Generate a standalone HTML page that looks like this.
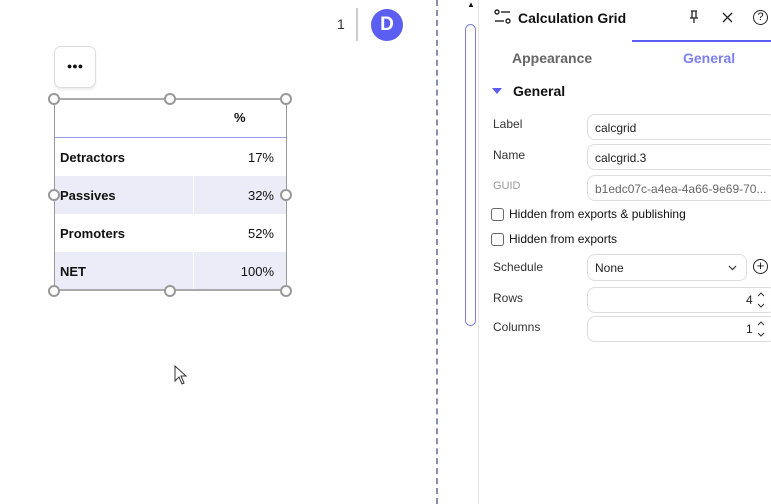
<!DOCTYPE html>
<html><head><style>
*{box-sizing:border-box;margin:0;padding:0}
body{width:771px;height:504px;background:#fff;position:relative;overflow:hidden;font-family:"Liberation Sans",sans-serif;color:#111}
.a{position:absolute}
.h{position:absolute;width:12px;height:12px;border:2px solid #999;border-radius:50%;background:#fff}
.row{position:absolute;left:54px;width:233px;height:38px;font-weight:bold;font-size:13px}
.row span{position:absolute;left:6px;top:12px}
.row b{position:absolute;right:13px;top:12px;font-weight:normal}
.lbl{position:absolute;left:493px;font-size:12px;color:#333}
.inp{position:absolute;left:587px;width:190px;height:26px;border:1px solid #ddd;border-radius:8px;font-size:12px;padding:6px 7px;color:#222}
.cb{position:absolute;left:491px;width:13px;height:13px;border:1px solid #666;border-radius:3px}
.sp{position:absolute;left:757px;font-size:9px;line-height:8px;color:#333}
</style></head><body>
<div class="a" style="left:337px;top:16px;font-size:14px;color:#333">1</div>
<div class="a" style="left:356px;top:8px;width:2px;height:33px;background:#ccc"></div>
<div class="a" style="left:371px;top:9px;width:32px;height:32px;border-radius:50%;background:#5b5ef0;color:#fff;font-weight:bold;font-size:19px;text-align:center;line-height:32px">D</div>
<div class="a" style="left:54px;top:46px;width:42px;height:42px;border:1px solid #ddd;border-radius:7px;box-shadow:0 2px 2px #eee;text-align:center;font-weight:bold;font-size:9px;line-height:38px">●●●</div>
<div class="a" style="left:234px;top:110px;font-weight:bold;font-size:13px">%</div>
<div class="row" style="top:138px"><span>Detractors</span><b>17%</b></div>
<div class="row" style="top:176px;background:#ececf8"><span>Passives</span><b>32%</b></div>
<div class="row" style="top:214px"><span>Promoters</span><b>52%</b></div>
<div class="row" style="top:252px;background:#ececf8"><span>NET</span><b>100%</b></div>
<div class="a" style="left:193px;top:176px;width:1px;height:38px;background:#fff"></div>
<div class="a" style="left:193px;top:252px;width:1px;height:38px;background:#fff"></div>
<div class="a" style="left:54px;top:137px;width:233px;height:1px;background:#9aa0e8"></div>
<div class="a" style="left:54px;top:98px;width:233px;height:193px;border:1px solid #999;border-top:2px solid #aaa;border-bottom:2px solid #aaa"></div>
<div class="h" style="left:48px;top:93px"></div><div class="h" style="left:164px;top:93px"></div><div class="h" style="left:280px;top:93px"></div>
<div class="h" style="left:48px;top:189px"></div><div class="h" style="left:280px;top:189px"></div>
<div class="h" style="left:48px;top:285px"></div><div class="h" style="left:164px;top:285px"></div><div class="h" style="left:280px;top:285px"></div>
<svg class="a" style="left:174px;top:365px" width="14" height="20"><path d="M1 1 L1 16 L5 12 L8 19 L10 18 L7 11 L12 11 Z" fill="#fff" stroke="#333"/></svg>
<div class="a" style="left:436px;top:0;height:504px;border-left:2px dashed #8a8fb0"></div>
<div class="a" style="left:467px;top:0;font-size:8px">▲</div>
<div class="a" style="left:465px;top:24px;width:11px;height:302px;border:1px solid #7b80e0;border-radius:6px"></div>
<div class="a" style="left:478px;top:0;width:1px;height:504px;background:#e4e4e4"></div>
<svg class="a" style="left:494px;top:9px" width="18" height="16"><g fill="none" stroke="#222" stroke-width="1.4"><circle cx="3" cy="3" r="2"/><line x1="7" y1="3" x2="16" y2="3"/><line x1="1" y1="12" x2="10" y2="12"/><circle cx="14" cy="12" r="2"/></g></svg>
<div class="a" style="left:518px;top:10px;font-weight:bold;font-size:14px">Calculation Grid</div>
<svg class="a" style="left:688px;top:10px" width="12" height="14"><g stroke="#222" fill="none" stroke-width="1.3"><path d="M3 1H9M4 1V8M8 1V8M2 8H10M6 8V13"/></g></svg>
<svg class="a" style="left:722px;top:12px" width="11" height="11"><path d="M1 1L10 10M10 1L1 10" stroke="#222" stroke-width="1.3"/></svg>
<div class="a" style="left:753px;top:10px;width:15px;height:15px;border:1.3px solid #222;border-radius:50%;font-size:11px;text-align:center;line-height:13px">?</div>
<div class="a" style="left:632px;top:40px;width:139px;height:2px;background:#5b5ef0"></div>
<div class="a" style="left:512px;top:50px;font-weight:bold;font-size:14px;color:#666">Appearance</div>
<div class="a" style="left:683px;top:50px;font-weight:bold;font-size:14px;color:#7b7ff0">General</div>
<div class="a" style="left:492px;top:88px;width:0;height:0;border-left:5px solid transparent;border-right:5px solid transparent;border-top:6px solid #5b5ef0"></div>
<div class="a" style="left:513px;top:83px;font-weight:bold;font-size:14px">General</div>
<div class="lbl" style="top:117px">Label</div><div class="inp" style="top:114px">calcgrid</div>
<div class="lbl" style="top:148px">Name</div><div class="inp" style="top:144px">calcgrid.3</div>
<div class="lbl" style="top:180px;color:#999;font-size:11px">GUID</div><div class="inp" style="top:175px;color:#666">b1edc07c-a4ea-4a66-9e69-70...</div>
<div class="cb" style="top:208px"></div><div class="a" style="left:509px;top:207px;font-size:12px">Hidden from exports &amp; publishing</div>
<div class="cb" style="top:233px"></div><div class="a" style="left:509px;top:232px;font-size:12px">Hidden from exports</div>
<div class="lbl" style="top:260px">Schedule</div><div class="inp" style="top:254px;width:160px;height:27px">None<svg style="position:absolute;right:9px;top:10px" width="9" height="6"><path d="M1 1L4.5 4.5L8 1" fill="none" stroke="#333" stroke-width="1.2"/></svg></div>
<div class="a" style="left:753px;top:259px;width:15px;height:15px;border:1.3px solid #222;border-radius:50%;font-size:13px;text-align:center;line-height:12px">+</div>
<div class="lbl" style="top:291px">Rows</div><div class="inp" style="top:287px;height:26px"><span style="position:absolute;left:158px;top:5px">4</span></div>
<div class="lbl" style="top:320px">Columns</div><div class="inp" style="top:316px;height:26px"><span style="position:absolute;left:158px;top:5px">1</span></div>
<svg class="a" style="left:757px;top:292px" width="8" height="16"><path d="M1 4L4 1L7 4M1 12L4 15L7 12" fill="none" stroke="#333"/></svg>
<svg class="a" style="left:757px;top:321px" width="8" height="16"><path d="M1 4L4 1L7 4M1 12L4 15L7 12" fill="none" stroke="#333"/></svg>
</body></html>
